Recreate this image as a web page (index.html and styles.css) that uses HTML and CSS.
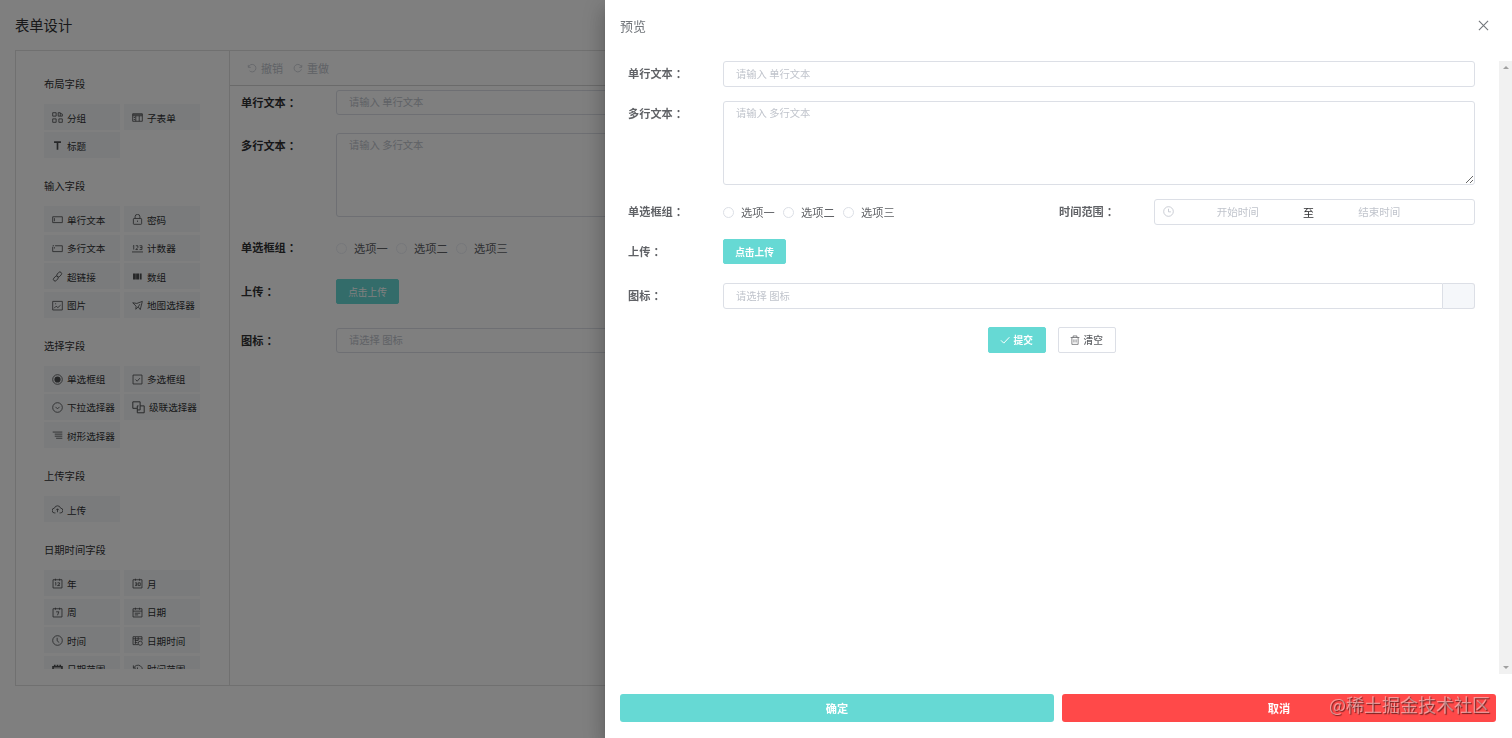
FILE: index.html
```html
<!DOCTYPE html>
<html lang="zh-CN">
<head>
    <meta charset="UTF-8">
    <meta name="viewport" content="width=device-width, initial-scale=1.0">
    <title>表单设计</title>
    <link rel="stylesheet" href="styles.css">
</head>
<body>
    <div class="page">
        <h1>表单设计</h1>
        <div class="designer">
            <div class="fields">
                <div class="fields-scroll" id="fields"></div>
            </div>
            <div class="canvas">
                <div class="toolbar">
                    <span><svg viewBox="0 0 16 16"><path d="M2 3v4h4M2.5 6.5A6 6 0 1 1 4 12.5"/></svg>撤销</span>
                    <span><svg viewBox="0 0 16 16"><path d="M14 3v4h-4M13.5 6.5A6 6 0 1 0 13.5 10"/></svg>重做</span>
                </div>
                <form class="form form-design">
                    <div class="row"><label>单行文本<span>：</span></label><input type="text" placeholder="请输入 单行文本"></div>
                    <div class="row"><label>多行文本<span>：</span></label><textarea placeholder="请输入 多行文本"></textarea></div>
                    <div class="row">
                        <label>单选框组<span>：</span></label>
                        <div class="radios"><span><i></i>选项一</span><span><i></i>选项二</span><span><i></i>选项三</span></div>
                    </div>
                    <div class="row row-upload"><label>上传<span>：</span></label><button type="button" class="btn primary">点击上传</button></div>
                    <div class="row"><label>图标<span>：</span></label><input type="text" placeholder="请选择 图标"></div>
                </form>
            </div>
        </div>
    </div>

    <div class="mask"></div>

    <div class="drawer">
        <div class="drawer-header">
            <span>预览</span>
            <svg viewBox="0 0 12 12"><path d="M1 1l10 10M11 1L1 11"/></svg>
        </div>
        <div class="drawer-body">
            <form class="form form-preview">
                <div class="row"><label>单行文本<span>：</span></label><input type="text" placeholder="请输入 单行文本"></div>
                <div class="row"><label>多行文本<span>：</span></label><textarea placeholder="请输入 多行文本"></textarea></div>
                <div class="row">
                    <label>单选框组<span>：</span></label>
                    <div class="radios"><span><i></i>选项一</span><span><i></i>选项二</span><span><i></i>选项三</span></div>
                    <label>时间范围<span>：</span></label>
                    <div class="range">
                        <svg viewBox="0 0 16 16"><circle cx="8" cy="8" r="7"/><path d="M8 4v4.5h3.5"/></svg>
                        <span class="range-text">开始时间</span>
                        <span class="range-sep">至</span>
                        <span class="range-text">结束时间</span>
                    </div>
                </div>
                <div class="row row-upload"><label>上传<span>：</span></label><button type="button" class="btn primary">点击上传</button></div>
                <div class="row"><label>图标<span>：</span></label><input type="text" class="with-append" placeholder="请选择 图标"><div class="append"></div></div>
                <div class="actions">
                    <button type="button" class="btn primary"><svg viewBox="0 0 16 16"><path d="M1.5 8.5l4.5 4.5 9-9.5"/></svg>提交</button>
                    <button type="button" class="btn"><svg viewBox="0 0 16 16"><path d="M1 4h14M5 4V1.5h6V4M3 4v11h10V4M6.3 7v5M9.7 7v5"/></svg>清空</button>
                </div>
            </form>
            <div class="scrollbar"><i class="up"></i><i class="down"></i></div>
        </div>
        <div class="drawer-footer">
            <button type="button" class="ok">确定</button>
            <button type="button" class="cancel">取消</button>
        </div>
    </div>

    <div class="watermark">@稀土掘金技术社区</div>

    <script>
        // Ícones das peças do formulário
        const cal = '<path d="M1.5 2.5h13v12h-13zM5 1v3M11 1v3"/>';
        const icons = {
            group: '<path d="M1 1h5v5H1zM1 10h5v5H1zM10 10h5v5h-5zM9 1h3v5H9zM12 2l3 1v3h-3"/>',
            table: '<path d="M1 2.5h14v11H1zM1 5.5h14M1 4h14M5.5 5.5v8M10.5 5.5v8M2.5 8h2M2.5 11h2"/>',
            title: '<path class="thick" d="M3 3h10M8 3v11"/>',
            input: '<path d="M1 4h14v8.5H1zM3.5 6v4.5"/>',
            textarea: '<path d="M4.5 4H15v8.5H1V5.5M1 4h2M3.5 6v2"/>',
            link: '<rect x="8" y="1" width="5" height="8" rx="2.5" transform="rotate(42 10.5 5)"/><rect x="3" y="7" width="5" height="8" rx="2.5" transform="rotate(42 5.5 11)"/>',
            image: '<path d="M1 2h14v12.5H1zM3 12l3-3 2.5 2 4-3.5M4.5 5.5h1.5"/>',
            lock: '<rect x="2" y="6.5" width="12" height="8.5" rx="1"/><path d="M4.5 6.5V4a3.5 3.5 0 0 1 7 0v2.5M8 9.5v2"/>',
            number: '<path d="M1.5 4.5l1-1v6M5.5 4h3v2.5l-3 3h3M11 4h3.5v5.5H11M11.5 6.7h3M0 13h16"/>',
            array: '<path class="fill" d="M1.5 3.5h4v9h-4zM6 3.5h4.5v9H6zM11.5 3.5H14v9h-2.5z"/>',
            map: '<path d="M1 4l6 1 8-3-3 12-3-4-3.5 3.5L6 9zM9 10l2.5-4"/>',
            radio: '<circle cx="8" cy="8" r="7"/><circle class="fill" cx="8" cy="8" r="4.5"/>',
            check: '<path d="M1.5 1.5h13v13h-13zM5 8l2.5 2.5L11.5 6"/>',
            select: '<circle cx="8" cy="8" r="7"/><path d="M5 7l3 3 3-3"/>',
            cascader: '<path d="M6 9H1V1h9v4M10 6h5v8.5H6.500V6H8M6.500 11H10V5"/>',
            tree: '<path d="M1 3h14M4 6h11M4 9h11M6 12h9"/>',
            upload: '<path d="M5 13H4a3.5 3.5 0 0 1-.5-7 4.7 4.7 0 0 1 9 0 3.5 3.5 0 0 1-.5 7h-1M8 12V7M6 9l2-2 2 2"/>',
            year: cal + '<path d="M4.5 7l1-.5V11M8 7h3v2L8 11h3.5"/>',
            month: cal + '<path d="M4.5 7H7v4H4.5M5 9h2M9 7h3v4H9z"/>',
            week: cal + '<path d="M6 7h4l-2 5"/>',
            date: cal + '<path d="M1.5 6h13M4 9h8M4 11.5h5"/>',
            time: '<circle cx="8" cy="8" r="7"/><path d="M7.5 4v4.5l3 2.5"/>',
            datetime: '<path d="M9 14H1.5V2.5h13V8M1.5 5.5h13M4 8h5M4 11h4M5 3v10M9 3v5"/><circle cx="12" cy="12" r="3"/>',
            daterange: '<path class="thick" d="M1.5 4h13v11h-13zM4 1v4M8 1v4M12 1v4M2 8h12"/>',
            timerange: '<path d="M2 2v4h4M2.5 6A6.5 6.5 0 1 1 3 11.5M8 5v4h3"/>'
        };

        // Grupos de campos do painel esquerdo
        const grupos = [
            ['布局字段', [['group', '分组'], ['table', '子表单'], ['title', '标题']]],
            ['输入字段', [['input', '单行文本'], ['lock', '密码'], ['textarea', '多行文本'], ['number', '计数器'], ['link', '超链接'], ['array', '数组'], ['image', '图片'], ['map', '地图选择器']]],
            ['选择字段', [['radio', '单选框组'], ['check', '多选框组'], ['select', '下拉选择器'], ['cascader', '级联选择器'], ['tree', '树形选择器']]],
            ['上传字段', [['upload', '上传']]],
            ['日期时间字段', [['year', '年'], ['month', '月'], ['week', '周'], ['date', '日期'], ['time', '时间'], ['datetime', '日期时间'], ['daterange', '日期范围'], ['timerange', '时间范围']]]
        ];

        document.getElementById('fields').innerHTML = grupos.map(([nome, itens]) => `
            <h2>${nome}</h2>
            <div class="chips">
                ${itens.map(([icone, texto]) => `<div class="chip"><svg class="icon-${icone}" viewBox="0 0 16 16">${icons[icone]}</svg>${texto}</div>`).join('')}
            </div>
        `).join('');
    </script>
</body>
</html>
```

FILE: styles.css
```css
* {
    box-sizing: border-box;
}
body {
    margin: 0;
    height: 738px;
    overflow: hidden;
    font-family: "Noto Sans CJK SC", sans-serif;
    font-size: 11px;
    color: #303133;
    background: #fff;
}
input, textarea, button {
    font-family: inherit;
    margin: 0;
}
svg {
    fill: none;
    stroke: currentColor;
    stroke-width: 1.2;
    flex: none;
}
.thick {
    stroke-width: 2.4;
}
.fill {
    fill: currentColor;
    stroke: none;
}

.page {
    height: 738px;
    padding: 0 15px;
}
h1 {
    margin: 0;
    height: 50px;
    line-height: 50px;
    font-size: 14.3px;
    font-weight: 400;
}
.designer {
    display: flex;
    height: 636px;
    border: 1px solid #e0e0e0;
}
.fields {
    width: 214px;
    padding: 23px 28px 16px;
    border-right: 1px solid #e0e0e0;
}
.fields-scroll {
    height: 595px;
    overflow: hidden;
}
h2 {
    margin: 0 0 10px;
    height: 20px;
    line-height: 19px;
    font-size: 10.3px;
    font-weight: 400;
}
.chips {
    display: grid;
    grid-template-columns: 76px 76px;
    gap: 2.4px 4px;
    margin-bottom: 18px;
}
.chip {
    display: flex;
    align-items: center;
    gap: 4px;
    height: 26px;
    padding: 1px 0 0 8px;
    font-size: 9.6px;
    line-height: 14px;
    white-space: nowrap;
    background: #f4f7f9;
}
.chip svg {
    width: 11px;
    height: 11px;
    opacity: 0.85;
}
.chip .icon-cascader {
    width: 13px;
    height: 13px;
}
.canvas {
    flex: 1;
}
.toolbar {
    display: flex;
    gap: 10px;
    height: 35px;
    padding-left: 17px;
    line-height: 34px;
    color: #c0c4cc;
    border-bottom: 1px solid #d4d4d4;
}
.toolbar span {
    display: flex;
    align-items: center;
    gap: 4px;
}
.toolbar svg {
    width: 10px;
    height: 10px;
}

.row {
    display: flex;
}
.row label {
    flex: none;
    width: 95px;
    height: 26px;
    line-height: 25px;
    font-size: 11.2px;
    font-weight: 700;
    color: #606266;
}
.row label span {
    margin-left: 3px;
}
.form input, .form textarea {
    flex: 1;
    min-width: 0;
    height: 26px;
    padding: 0 12px 2px;
    font-size: 10.3px;
    border: 1px solid #dcdfe6;
    border-radius: 3px;
    background: #fff;
    outline: none;
}
.form textarea {
    height: 84px;
    padding-top: 3px;
    line-height: 15px;
}
.form input::placeholder, .form textarea::placeholder {
    color: #c0c4cc;
}
.form .with-append {
    border-radius: 3px 0 0 3px;
}
.append {
    width: 32px;
    height: 26px;
    border: 1px solid #dcdfe6;
    border-left: 0;
    border-radius: 0 3px 3px 0;
    background: #f5f7fa;
}
.radios {
    display: flex;
    flex: 1;
    gap: 8px;
    height: 26px;
    line-height: 25px;
    font-size: 11.2px;
    color: #606266;
}
.radios span {
    display: flex;
    align-items: center;
    gap: 7px;
    width: 52px;
    white-space: nowrap;
}
.radios i {
    flex: none;
    width: 11px;
    height: 11px;
    border: 1px solid #dcdfe6;
    border-radius: 50%;
}
.btn {
    display: flex;
    align-items: center;
    gap: 4px;
    height: 26px;
    padding: 0 11px 1px;
    font-size: 9.7px;
    font-weight: 500;
    color: #606266;
    border: 1px solid #dcdfe6;
    border-radius: 2px;
    background: #fff;
}
.btn svg {
    width: 10px;
    height: 10px;
}
.btn.primary {
    font-weight: 700;
    color: #fff;
    border-color: #66d9d4;
    background: #66d9d4;
}
.btn.primary svg {
    stroke-width: 1.6;
}
.row-upload .btn {
    justify-content: center;
    width: 63px;
    height: 25px;
    padding: 0;
}

.form-design {
    display: flex;
    flex-direction: column;
    gap: 18px;
    padding: 4px 0 0 11px;
}
.form-design label {
    color: #303133;
}
.form-design input, .form-design .row:first-child label {
    height: 25px;
}
.form-design .radios i {
    border-color: #ebeef5;
}
.form-design .row-upload {
    margin-bottom: 5px;
}
.form-design .row-upload .btn {
    font-weight: 400;
}

.mask {
    position: fixed;
    inset: 0;
    background: rgba(0, 0, 0, 0.5);
}
.drawer {
    position: fixed;
    top: 0;
    right: 0;
    bottom: 0;
    display: flex;
    flex-direction: column;
    width: 907px;
    background: #fff;
    box-shadow: 0 6px 8px -4px rgba(0, 0, 0, 0.2), 0 13px 19px 2px rgba(0, 0, 0, 0.14), 0 5px 24px 4px rgba(0, 0, 0, 0.12);
}
.drawer-header {
    display: flex;
    align-items: center;
    justify-content: space-between;
    height: 61px;
    padding: 0 23px 10px 15px;
    font-size: 13px;
    color: #72767b;
}
.drawer-header svg {
    width: 11px;
    height: 11px;
}
.drawer-body {
    display: flex;
    justify-content: space-between;
    height: 613px;
}
.form-preview {
    display: flex;
    flex-direction: column;
    gap: 14px;
    width: 870px;
    padding-left: 23px;
}
.form-preview .row-upload {
    margin-bottom: 4px;
}
.range {
    display: flex;
    align-items: center;
    width: 321px;
    height: 26px;
    padding: 0 31px 1px 8px;
    font-size: 10.5px;
    color: #c0c4cc;
    border: 1px solid #dcdfe6;
    border-radius: 3px;
}
.range svg {
    width: 11px;
    height: 11px;
}
.range-text {
    flex: 1;
    text-align: center;
}
.range-sep {
    width: 14px;
    text-align: center;
    font-size: 11px;
    color: #303133;
}
.actions {
    display: flex;
    justify-content: center;
    gap: 12px;
    padding-top: 4px;
}
.actions .btn {
    width: 58px;
    white-space: nowrap;
}
.scrollbar {
    display: flex;
    flex-direction: column;
    justify-content: space-between;
    align-items: center;
    width: 13px;
    padding: 5px 0;
    background: #f1f1f1;
}
.scrollbar i {
    border: 3px solid transparent;
}
.scrollbar .up {
    border-top: 0;
    border-bottom-color: #a0a0a0;
}
.scrollbar .down {
    border-bottom: 0;
    border-top-color: #a0a0a0;
}
.drawer-footer {
    display: flex;
    gap: 8px;
    padding: 20px 16px 16px 15px;
}
.drawer-footer button {
    flex: 1;
    height: 28px;
    font-size: 11.2px;
    font-weight: 700;
    color: #fff;
    border: 0;
    border-radius: 3px;
}
.ok {
    background: #66d9d4;
}
.cancel {
    background: #ff4949;
}
.watermark {
    position: fixed;
    right: 22px;
    bottom: 21px;
    font-size: 18px;
    line-height: 26px;
    color: rgba(255, 255, 255, 0.45);
    text-shadow: 1px 1px 1px rgba(0, 0, 0, 0.55);
}
```
